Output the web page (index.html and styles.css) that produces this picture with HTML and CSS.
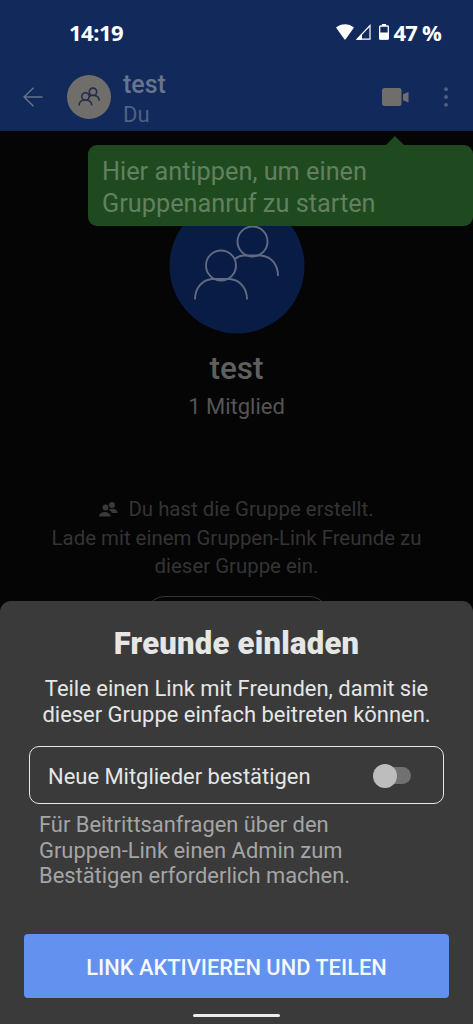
FILE: index.html
```html
<!DOCTYPE html>
<html lang="de">
<head>
<meta charset="utf-8">
<title>test</title>
<link rel="stylesheet" href="styles.css">
</head>
<body>
<div class="phone">
  <header class="header">
    <div class="status">
      <span class="clock">14:19</span>
      <div class="status-right">
        <svg class="wifi" width="18" height="16" viewBox="0 0 18 16"><path d="M0 3.6C5-.9 13-.9 18 3.6L9.8 15Q9 16 8.2 15Z" fill="#fff"/></svg>
        <svg class="signal" width="15" height="16" viewBox="0 0 15 16"><path d="M1.2 15.2L14 1.6V15.2Z" fill="none" stroke="#fff" stroke-width="1.2"/><path d="M0 15.8L6 9.4V15.8Z" fill="#fff"/></svg>
        <svg class="battery" width="10" height="16" viewBox="0 0 10 16"><path d="M3 0h4v2H3z" fill="#fff"/><rect x=".7" y="2" width="8.6" height="13.2" rx=".8" fill="none" stroke="#fff" stroke-width="1.3"/><path d="M.5 8.5h9V15.5h-9z" fill="#fff"/></svg>
        <span class="percent">47 %</span>
      </div>
    </div>
    <div class="toolbar">
      <svg class="back" width="20" height="20" viewBox="0 0 20 20"><path d="M19.5 10H1M10.5.8L1 10l9.500 9.200" fill="none" stroke="#66738c" stroke-width="1.5"/></svg>
      <div class="avatar-small">
        <svg width="24" height="20" viewBox="0 0 24 20" fill="none" stroke="#252b48" stroke-width="1.6"><circle cx="8.500" cy="9.500" r="3.700"/><path d="M2 18.500C2.300 15 4 13.300 7 13.200H10C13 13.300 14.500 15 14.800 18.500"/><circle cx="16" cy="4.800" r="3.700"/><path d="M16 8.500H17.500C20.500 8.700 22 10.300 22.300 13.800M12.300 9.200L14.500 8.500"/></svg>
      </div>
      <div class="names"><div class="name">test</div><div class="who">Du</div></div>
      <svg class="video" width="28" height="20" viewBox="0 0 28 20" fill="#706e6d"><rect x="1" y="1" width="19.500" height="18" rx="2.500"/><path d="M22 7.200L27.500 5V15.500L22 13.300Z"/></svg>
      <svg class="more" width="4" height="20" viewBox="0 0 4 20" fill="#50617e"><circle cx="2" cy="2.200" r="1.900"/><circle cx="2" cy="10" r="1.900"/><circle cx="2" cy="17.800" r="1.900"/></svg>
    </div>
  </header>

  <main class="chat">
    <svg class="avatar-large" width="136" height="136" viewBox="0 0 136 136">
      <circle cx="68" cy="68" r="67.500" fill="#081c46"/>
      <g fill="none" stroke="#616a80" stroke-width="1.900">
        <circle cx="83.500" cy="43.500" r="15"/><circle cx="52" cy="67.500" r="15"/>
        <path d="M26 101.500C26 90 33 82 43 81H61C71 82 78 90 78 101.500"/>
        <path d="M66 61Q70 57.500 75 57.500H92C102 58.500 109 66 109 78"/>
      </g>
    </svg>
    <h1 class="group-name">test</h1>
    <p class="members">1 Mitglied</p>
    <p class="notice"><svg class="group-icon" width="19" height="16" viewBox="0 0 19 16" fill="#393939"><circle cx="6.500" cy="6.500" r="3"/><path d="M0 15.500c0-6 11.500-6 11.500 0z"/><circle cx="13" cy="4" r="3"/><path d="M9.500 9C13 6.500 18.500 8 18.500 12H13Q12.500 10 9.500 9Z"/></svg>Du hast die Gruppe erstellt.<br>Lade mit einem Gruppen-Link Freunde zu<br>dieser Gruppe ein.</p>
    <div class="invite-outline"></div>
  </main>

  <div class="tooltip">Hier antippen, um einen<br>Gruppenanruf zu starten</div>

  <section class="sheet">
    <h2 class="sheet-title">Freunde einladen</h2>
    <p class="sheet-text">Teile einen Link mit Freunden, damit sie<br>dieser Gruppe einfach beitreten können.</p>
    <div class="option"><span class="option-label">Neue Mitglieder bestätigen</span><span class="switch"><span class="thumb"></span></span></div>
    <p class="hint">Für Beitrittsanfragen über den<br>Gruppen-Link einen Admin zum<br>Bestätigen erforderlich machen.</p>
    <button class="share">LINK AKTIVIEREN UND TEILEN</button>
    <div class="home-bar"></div>
  </section>
</div>
</body>
</html>
```
FILE: styles.css
```css
* { box-sizing: border-box; margin: 0; padding: 0; }
body { background: #050505; font-family: Roboto, "Liberation Sans", sans-serif; }
.phone { position: relative; display: flex; flex-direction: column; width: 473px; height: 1024px; overflow: hidden; white-space: nowrap; background: #050505; }

.header { height: 131px; background: #112a5b; border-bottom: 1px solid #102450; }
.status { display: flex; justify-content: space-between; align-items: flex-start; height: 65px; padding: 16px 32px 0 69px; color: #fff; font: 700 22px/32px "Open Sans", sans-serif; }
.clock { letter-spacing: -.5px; }
.status-right { display: flex; align-items: center; }
.signal { margin-left: 2px; }
.battery { margin-left: 8px; }
.percent { margin-left: 5px; letter-spacing: -.8px; }
.toolbar { display: flex; align-items: center; height: 64px; padding: 0 25px 0 23px; }
.avatar-small { display: flex; align-items: center; justify-content: center; width: 44px; height: 44px; margin-left: 24px; border-radius: 50%; background: #706e6a; }
.names { flex: 1; margin-left: 12px; padding-top: 5px; color: #68748c; }
.name { font-weight: 500; font-size: 25px; line-height: 31px; }
.who { font-size: 22px; line-height: 30px; color: #51617f; }
.more { margin-left: 35px; }

.chat { display: flex; flex-direction: column; align-items: center; flex: 1; padding-top: 67px; }
.group-name { margin-top: 17px; color: #5f5f5f; font-weight: 500; font-size: 31.500px; line-height: 36px; }
.members { margin-top: 5px; color: #555; font-size: 22px; line-height: 30px; }
.notice { margin-top: 73px; color: #343434; font-size: 20.400px; line-height: 28.500px; text-align: center; }
.group-icon { margin-right: 10px; vertical-align: -1px; }
.invite-outline { width: 184px; height: 50px; margin-top: 15px; border: 1.500px solid #343434; border-radius: 20px; }

.tooltip { position: absolute; top: 145px; left: 88px; width: 385px; height: 81px; padding: 10.500px 14px; border-radius: 9px; background: #1f4a20; color: #62805f; font-size: 25.300px; line-height: 32.500px; }
.tooltip::before { content: ""; position: absolute; top: -9px; left: 297px; border: 10px solid transparent; border-top: 0; border-bottom-color: #1f4a20; }

.sheet { position: absolute; inset: 601px 0 0; display: flex; flex-direction: column; padding: 25px 24px 0; border-radius: 11px 11px 0 0; background: #3a3a3a; color: #e6e6e6; }
.sheet-title { font-weight: 900; font-size: 31px; line-height: 36px; letter-spacing: .25px; text-align: center; }
.sheet-text { margin-top: 14px; font-size: 21.950px; line-height: 25.500px; text-align: center; }
.option { display: flex; align-items: center; justify-content: space-between; height: 58px; margin: 19px 5px 0; padding: 0 31px 0 18px; border: 1px solid #e6e6e6; border-radius: 10px; font-size: 21.950px; }
.option-label { padding-top: 2px; }
.switch { display: flex; align-items: center; width: 36px; height: 17px; margin: 1px 1px 0 0; border-radius: 9px; background: #717171; }
.thumb { width: 24px; height: 24px; margin-left: -2px; border-radius: 50%; background: #bdbdbd; }
.hint { margin: 8px 15px 0; color: #a5a5a5; font-size: 21.900px; line-height: 25.500px; }
.share { height: 64px; margin-top: 45px; padding-top: 3px; border: 0; border-radius: 4px; background: #6391ef; color: #f5f8ff; font: 500 21.850px Roboto, sans-serif; white-space: nowrap; }
.home-bar { align-self: center; width: 87px; height: 3px; margin-top: 16px; border-radius: 2px; background: #ededed; }
```
